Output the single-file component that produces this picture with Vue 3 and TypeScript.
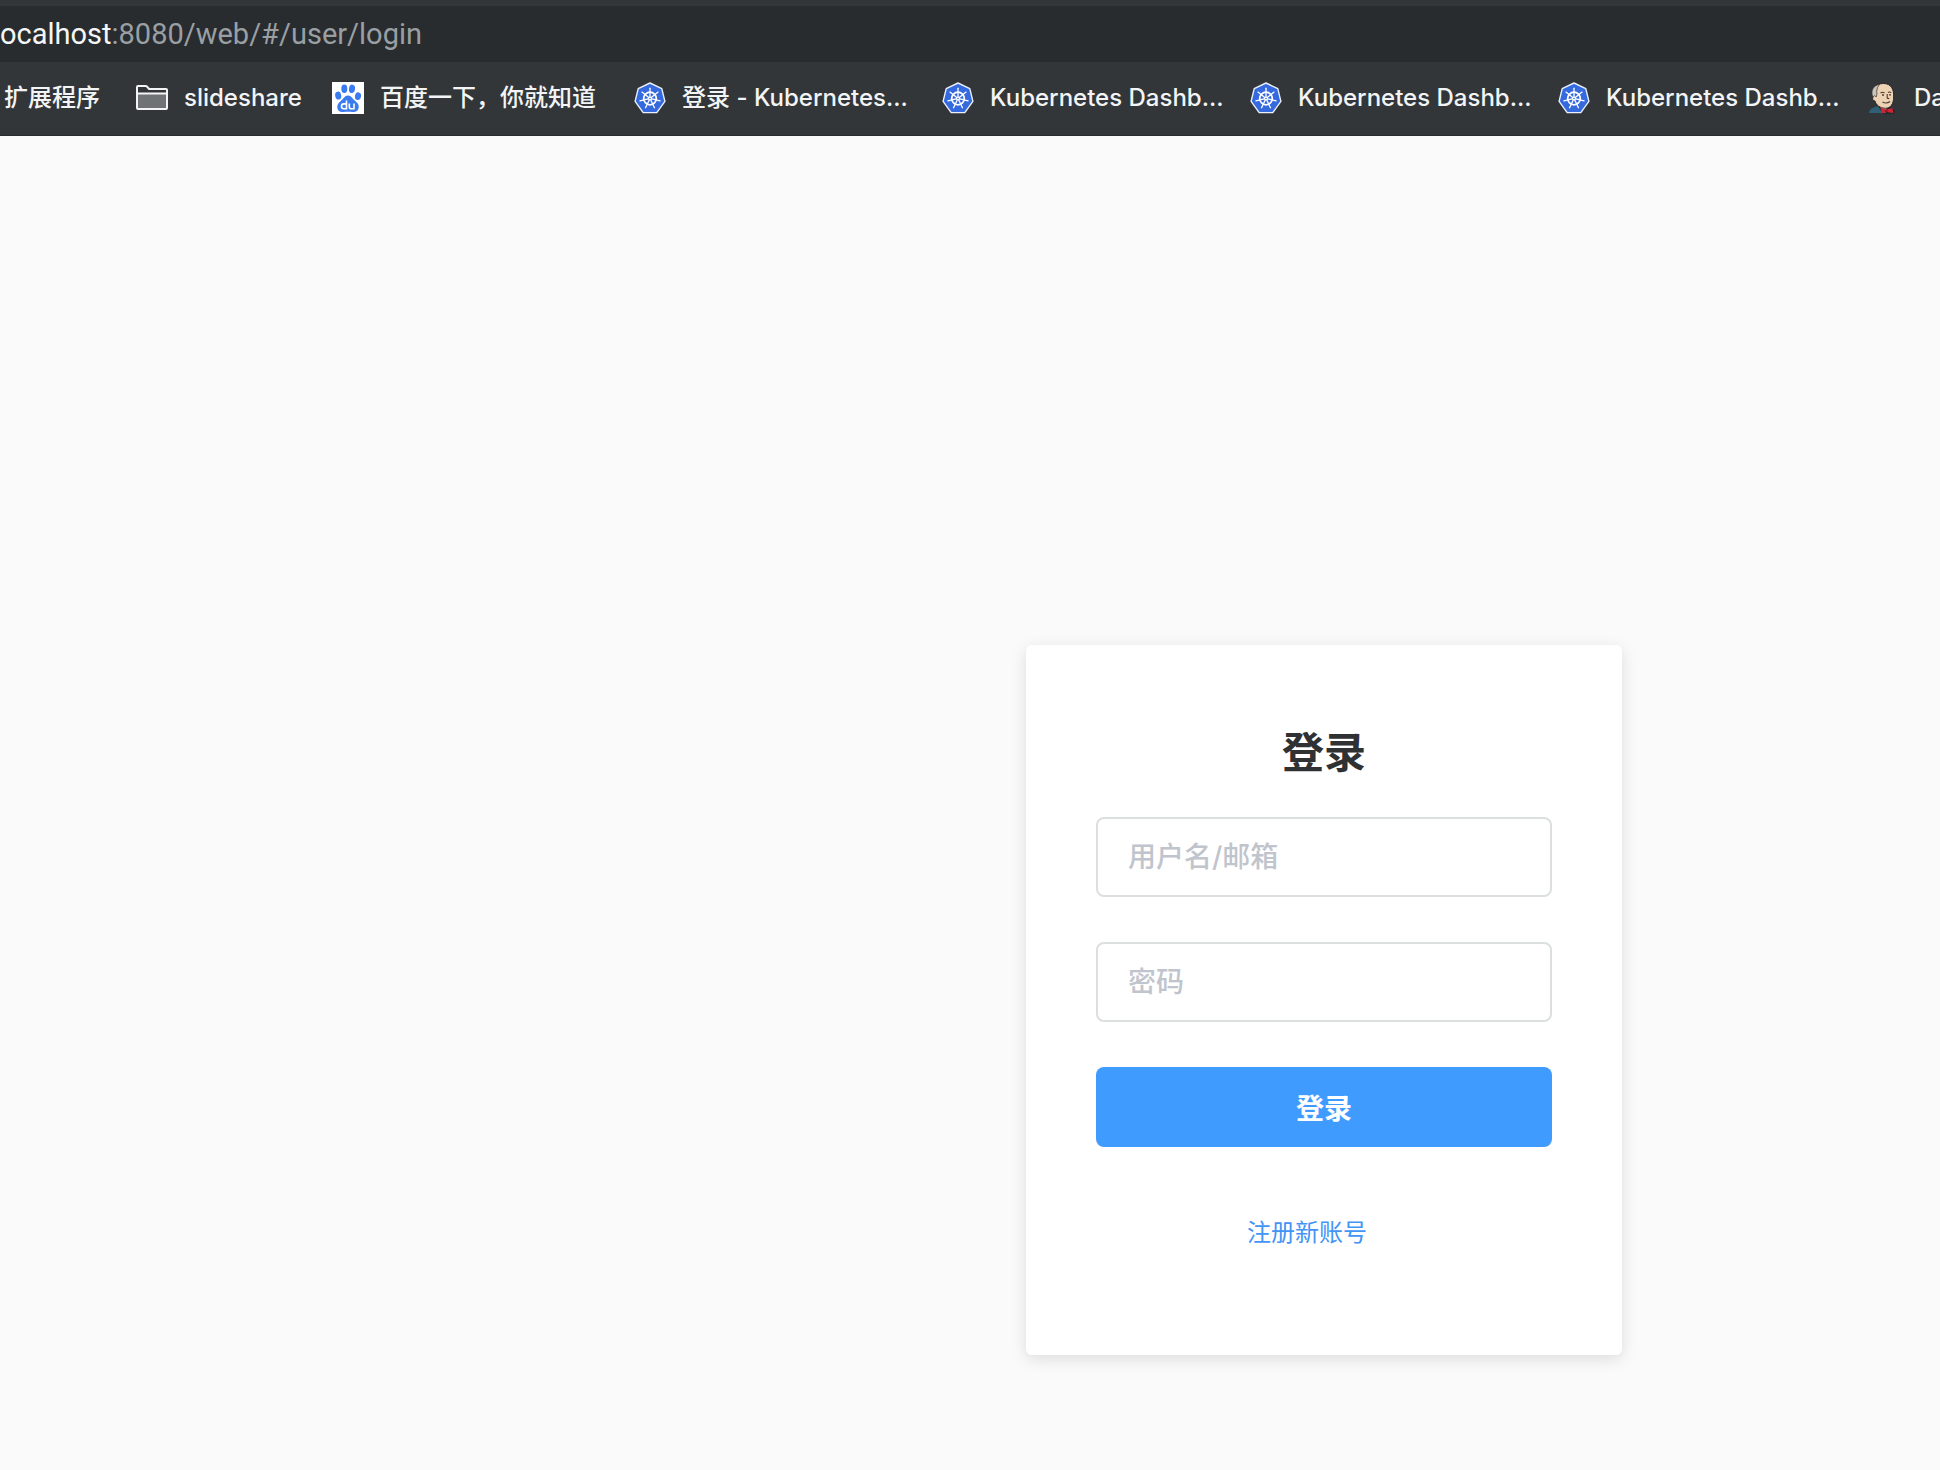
<script setup lang="ts">
import { ref } from 'vue'

interface Bookmark {
  label: string
  icon: 'plain' | 'folder' | 'baidu' | 'kubernetes' | 'jenkins'
}

const bookmarks: Bookmark[] = [
  { label: '扩展程序', icon: 'plain' },
  { label: 'slideshare', icon: 'folder' },
  { label: '百度一下，你就知道', icon: 'baidu' },
  { label: '登录 - Kubernetes...', icon: 'kubernetes' },
  { label: 'Kubernetes Dashb...', icon: 'kubernetes' },
  { label: 'Kubernetes Dashb...', icon: 'kubernetes' },
  { label: 'Kubernetes Dashb...', icon: 'kubernetes' },
  { label: 'Da', icon: 'jenkins' },
]

const spokes = Array.from({ length: 7 }, (_, i) => (i * 360) / 7)
const account = ref('')
const password = ref('')
</script>

<template>
  <div class="browser">
    <header>
      <div class="address"><span class="host">ocalhost</span>:8080/web/#/user/login</div>
      <nav class="bookmarks" aria-label="Bookmarks">
        <a v-for="(item, i) in bookmarks" :key="i" class="bookmark" :class="item.icon" href="#">
          <svg v-if="item.icon === 'folder'" class="icon" viewBox="0 0 32 32">
            <path d="M1 26V5q0-1 1-1h7.500q1 0 1.800.9l1.700 2.100H30q1 0 1 1v18q0 1-1 1H2q-1 0-1-1z" fill="#323639" />
            <path d="M2 12h28v14H2z" fill="#707375" />
            <path d="M1 26V5q0-1 1-1h7.500q1 0 1.800.9l1.700 2.100H30q1 0 1 1v18q0 1-1 1H2q-1 0-1-1zM1 11.500h30" fill="none" stroke="#f4f4f4" stroke-width="2" />
          </svg>
          <svg v-else-if="item.icon === 'baidu'" class="icon" viewBox="0 0 32 32">
            <rect width="32" height="32" fill="#fff" />
            <g fill="#3b7bf0">
              <ellipse cx="12.300" cy="6.800" rx="3" ry="4.200" />
              <ellipse cx="20" cy="6.800" rx="3" ry="4.200" transform="rotate(8 20 6.800)" />
              <ellipse cx="6.200" cy="13.600" rx="3" ry="4" transform="rotate(-12 6.200 13.600)" />
              <ellipse cx="26" cy="14.200" rx="3" ry="3.900" transform="rotate(12 26 14.200)" />
              <path d="M16 13.500c3.400 0 4.500 3.300 7 5.300 2.300 1.900 4.200 3.700 3.700 6.700-.6 3.700-3.300 4.700-6.200 4.500-3-.3-6-.3-9 0-3 .3-5.700-.8-6.200-4.500-.4-3 1.500-4.800 3.700-6.700 2.500-2 3.600-5.300 7-5.300z" />
            </g>
            <g fill="none" stroke="#fff" stroke-width="1.600">
              <path d="M14.500 18.500v8.200h-2.700q-2.300 0-2.300-2.400t2.300-2.400h2.700M17.300 21.500v3.200q0 2 2 2h2.700v-5.200" />
            </g>
          </svg>
          <svg v-else-if="item.icon === 'kubernetes'" class="icon" viewBox="0 0 32 32">
            <path d="M16 1 27.800 6.700 30.900 19.300 22.800 30.600H9.200L1.100 19.300 4.200 6.700z" fill="#3569de" stroke="#e9effb" stroke-width="1.400" stroke-linejoin="round" />
            <circle cx="16" cy="16.500" r="6.300" fill="none" stroke="#fff" stroke-width="1.700" />
            <path v-for="a in spokes" :key="a" d="M16 14.500V6.200" :transform="`rotate(${a} 16 16.500)`" stroke="#fff" stroke-width="1.300" stroke-linecap="round" />
            <circle cx="16" cy="16.500" r="2.100" fill="#fff" />
            <circle cx="16" cy="16.500" r=".8" fill="#3569de" />
          </svg>
          <svg v-else-if="item.icon === 'jenkins'" class="icon" viewBox="0 0 32 32">
            <path d="M3 31q.5-4.500 4.500-5.500l5-1.500 6 7z" fill="#2f6076" />
            <path d="M12 24l12 1 5 3-1 4H17z" fill="#25292b" />
            <path d="M13 24l8 2-2 5z" fill="#e8e9e8" />
            <path d="M7 15C5 6 10 1.500 17.500 1.500S28 7 27.700 15c-.2 7-3 11.300-8.200 11.300-5.500 0-9.500-3.300-10.500-7.300-2.200.3-3-3-2-4z" fill="#eed2b4" stroke="#262320" stroke-width="1" />
            <path d="M13.500 2.300C7 3.500 4.500 9 6.800 15l1.900-1.400 1.500 1.400q1.300-3 .5-6 .3-3.600 2.800-6.700z" fill="#c9c5bd" stroke="#34302c" stroke-width=".7" />
            <path d="M14.500 11q2-1.500 4 0M22 10.500q1.800-1.200 3.200.2M21.200 12v4q1.200 1 2 .2M16.500 20q4 2.200 7.500-.5" fill="none" stroke="#4a3a30" stroke-width="1.100" />
            <circle cx="17" cy="13" r=".9" fill="#3b302a" />
            <circle cx="24" cy="12.800" r=".9" fill="#3b302a" />
            <path d="M14.500 25.500l5.500 2 6.500-1.500.8 5-6.800-1-5 1.500z" fill="#cc2636" />
            <circle cx="20.300" cy="28.700" r="1.500" fill="#8d1723" />
          </svg>
          <span class="label">{{ item.label }}</span>
        </a>
      </nav>
    </header>
    <main>
      <form class="card" @submit.prevent>
        <h1>登录</h1>
        <input v-model="account" type="text" placeholder="用户名/邮箱" aria-label="用户名/邮箱" />
        <input v-model="password" type="password" placeholder="密码" aria-label="密码" />
        <button type="submit">登录</button>
        <a class="register" href="#">注册新账号</a>
      </form>
    </main>
  </div>
</template>

<style>
body {
  margin: 0;
  background: #fafafa;
}
</style>

<style scoped>
.browser {
  min-height: 100vh;
  overflow: hidden;
  background: #fafafa;
  font-family: Inter, "Noto Sans CJK SC", sans-serif;
}
header {
  background: #323639;
  padding-top: 6px;
}
.address {
  height: 56px;
  line-height: 56px;
  background: #282c2f;
  color: #9a9fa4;
  font-family: Roboto, sans-serif;
  font-size: 29px;
  white-space: nowrap;
}
.host {
  color: #f5f6f7;
}
.bookmarks {
  display: flex;
  gap: 34px;
  box-sizing: border-box;
  height: 74px;
  padding: 0 0 2px 4px;
  overflow: hidden;
  border-bottom: 1px solid #292c2e;
}
.bookmark {
  display: flex;
  flex: none;
  align-items: center;
  gap: 16px;
  color: #f3f4f5;
  font-size: 24px;
  font-weight: 500;
  line-height: 32px;
  text-decoration: none;
  white-space: nowrap;
}
.plain .label {
  width: 98px;
}
.folder .label {
  width: 114px;
}
.baidu .label {
  width: 220px;
}
.kubernetes .label {
  width: 226px;
}
.icon {
  display: block;
  flex: none;
  width: 32px;
  height: 32px;
}
main {
  display: flex;
  justify-content: center;
  padding: 509px 0 64px 708px;
}
.card {
  display: flex;
  flex-direction: column;
  box-sizing: border-box;
  width: 596px;
  padding: 76px 70px 106px;
  border-radius: 6px;
  background: #fff;
  box-shadow: 0 4px 16px rgba(0, 0, 0, 0.12);
}
h1 {
  margin: 0 0 32px;
  color: #303133;
  font-size: 42px;
  font-weight: 700;
  line-height: 64px;
  text-align: center;
}
input,
button {
  box-sizing: border-box;
  width: 100%;
  height: 80px;
  margin: 0 0 45px;
  border-radius: 8px;
  font-family: inherit;
  font-size: 28px;
}
input {
  padding: 0 30px;
  border: 2px solid #dcdfe0;
  background: #fff;
  color: #606266;
  outline: none;
}
input::placeholder {
  color: #c0c4cc;
  font-weight: 500;
  opacity: 1;
}
button {
  border: 0;
  background: #409bff;
  color: #fff;
  font-weight: 700;
}
.register {
  align-self: center;
  margin: 25px 34px 0 0;
  color: #4294f5;
  font-size: 24px;
  line-height: 32px;
  text-decoration: none;
}
</style>
